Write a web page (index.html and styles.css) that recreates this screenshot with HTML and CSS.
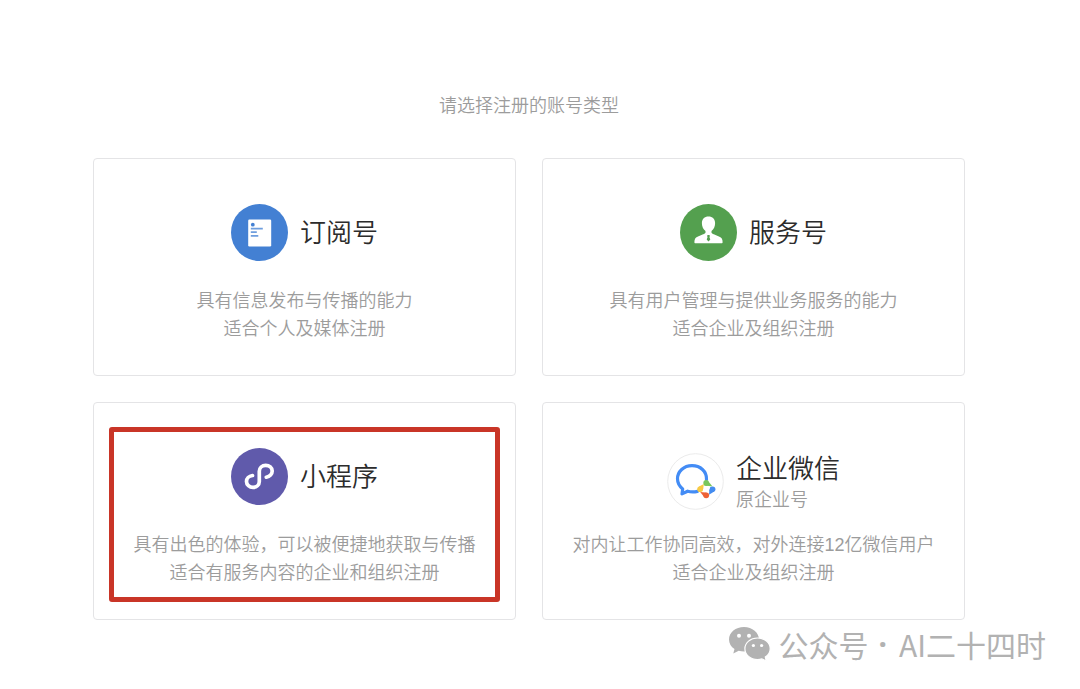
FILE: index.html
```html
<!DOCTYPE html>
<html lang="zh-CN">
<head>
<meta charset="utf-8">
<meta name="viewport" content="width=device-width, initial-scale=1">
<title>请选择注册的账号类型</title>
<link rel="stylesheet" href="styles.css">
</head>
<body>
<main class="page">
  <h1 class="prompt">请选择注册的账号类型</h1>
  <div class="types">
    <a class="card" href="#subscription">
      <div class="brand">
        <svg class="icon" viewBox="0 0 57 57" aria-hidden="true">
          <circle cx="28.5" cy="28.5" r="28.5" fill="#4380d3"/>
          <rect x="17.200" y="15.500" width="23" height="27" rx="1.200" fill="#fff"/>
          <circle cx="21.800" cy="20.700" r="1.900" fill="#4380d3"/>
          <path d="M19.800 24.700h12M19.800 28.200h6M19.800 31.900h7.500" stroke="#6f9ede" stroke-width="1.700"/>
        </svg>
        <h2 class="name">订阅号</h2>
      </div>
      <p class="desc">具有信息发布与传播的能力<br>适合个人及媒体注册</p>
    </a>
    <a class="card" href="#service">
      <div class="brand">
        <svg class="icon" viewBox="0 0 57 57" aria-hidden="true">
          <circle cx="28.5" cy="28.5" r="28.5" fill="#54a04f"/>
          <path d="M28.500 12.500c-4 0-6.600 2.700-6.600 6.700 0 3 1.300 6.200 3.600 7.900v1.700c-.3 1.600-8.500 3.100-10.300 5.700-.6 1-.8 2.300-.8 3.700 0 .6.400 1 1 1h26.200c.6 0 1-.4 1-1 0-1.400-.2-2.700-.8-3.700-1.800-2.600-10-4.100-10.300-5.700v-1.700c2.300-1.700 3.600-4.900 3.600-7.900 0-4-2.600-6.700-6.600-6.700z" fill="#fff"/>
          <path d="M27.500 31h2l.4 1.200-.5.800.9 2.600-1.800 2-1.800-2 .9-2.600-.5-.8z" fill="#54a04f"/>
        </svg>
        <h2 class="name">服务号</h2>
      </div>
      <p class="desc">具有用户管理与提供业务服务的能力<br>适合企业及组织注册</p>
    </a>
    <a class="card card-marked" href="#miniprogram">
      <div class="brand">
        <svg class="icon" viewBox="0 0 57 57" aria-hidden="true">
          <circle cx="28.5" cy="28.5" r="28.5" fill="#605aab"/>
          <path d="M21.500 27.500c-3.600.5-6 3-6 6 0 3.300 2.900 5.900 6.500 5.900s6.300-2.600 6.300-5.900V23.200c0-3.300 2.800-5.900 6.400-5.900s6.500 2.500 6.500 5.700c0 3-2.400 5.500-5.900 6.200" fill="none" stroke="#fff" stroke-width="3.700" stroke-linecap="round"/>
        </svg>
        <h2 class="name">小程序</h2>
      </div>
      <p class="desc">具有出色的体验，可以被便捷地获取与传播<br>适合有服务内容的企业和组织注册</p>
    </a>
    <a class="card" href="#work">
      <div class="brand brand-stacked">
        <svg class="icon" viewBox="0 0 57 57" aria-hidden="true">
          <circle cx="28.500" cy="28.500" r="27.800" fill="#fff" stroke="#ebebeb"/>
          <path d="M39.500 26.500c.3-8.300-6.200-13.800-14.500-13.800-8.200 0-14.500 5.800-14.500 13.100 0 4.300 2 7.600 5.200 10.100l-.7 5 5.600-2.700c3.300 1 6.400 1 9.900.2" fill="none" stroke="#438cf5" stroke-width="3.200" stroke-linejoin="round" stroke-linecap="round"/>
          <path d="M41.700 28.800L45.500 33.400L40.200 32.800L36.800 31.900z" fill="#79c75b"/>
          <circle cx="39.200" cy="30" r="2.900" fill="#79c75b"/>
          <path d="M46.800 38.700L42 41.700L42.300 37.200L43.600 33.800z" fill="#438cf0"/>
          <circle cx="45.600" cy="36.200" r="2.800" fill="#438cf0"/>
          <path d="M36.700 43.600L33.200 39L38.300 39.500L41.700 40.500z" fill="#ee6235"/>
          <circle cx="39.200" cy="42.300" r="2.900" fill="#ee6235"/>
          <path d="M31.600 33.800L36.800 31L36.300 35.600L35.200 38.600z" fill="#f8ca43"/>
          <circle cx="33" cy="36.200" r="2.800" fill="#f8ca43"/>
        </svg>
        <div>
          <h2 class="name">企业微信</h2>
          <p class="former">原企业号</p>
        </div>
      </div>
      <p class="desc">对内让工作协同高效，对外连接12亿微信用户<br>适合企业及组织注册</p>
    </a>
  </div>
</main>
<footer class="signature">
  <svg class="chat" viewBox="0 0 42 34" aria-hidden="true">
    <path d="M15 0C6.700 0 0 5.500 0 12.400c0 3.900 2.100 7.300 5.500 9.600L4.300 26.500l5.400-2.800c1.700.5 3.400.8 5.300.8 8.300 0 15-5.400 15-12.100S23.300 0 15 0z" fill="#b2b2b2"/>
    <path d="M28.500 11c-7 0-12.600 4.700-12.600 10.700s5.600 10.900 12.600 10.900c1.600 0 3-.2 4.400-.7l4.400 2.200-1-4c3-2 4.900-5 4.900-8.400 0-6-5.700-10.700-12.700-10.700z" fill="#b2b2b2" stroke="#fff" stroke-width="1.200"/>
    <circle cx="10" cy="8.800" r="2" fill="#fff"/><circle cx="20" cy="8.800" r="2" fill="#fff"/>
    <circle cx="24.400" cy="18.500" r="1.600" fill="#fff"/><circle cx="32.600" cy="18.500" r="1.600" fill="#fff"/>
  </svg>
  <span>公众号</span><span class="dot">·</span><span>AI二十四时</span>
</footer>
</body>
</html>
```

FILE: styles.css
```css
* {
  box-sizing: border-box;
}

body {
  margin: 0;
  background: #fff;
  color: #9c9c9c;
  font-family: "Liberation Sans", "Noto Sans CJK SC", sans-serif;
  font-size: 18px;
  font-weight: 350;
  line-height: 28px;
}

h1, h2, p {
  margin: 0;
  font-weight: inherit;
}

.page {
  max-width: 1080px;
  padding: 92px 115px 0 93px;
}

.prompt {
  margin-bottom: 38px;
  font-size: 18px;
  text-align: center;
}

.types {
  display: grid;
  grid-template-columns: repeat(2, 1fr);
  gap: 26px;
}

.card {
  position: relative;
  padding: 45px 8px 32px;
  border: 1px solid #e4e4e6;
  border-radius: 4px;
  color: inherit;
  text-align: center;
  text-decoration: none;
}

.card-marked::after {
  content: "";
  position: absolute;
  inset: 24px 15px 17px;
  border: 5px solid #c93527;
  border-radius: 3px;
}

.brand {
  display: flex;
  align-items: center;
  justify-content: center;
  gap: 12px;
  margin-bottom: 26px;
}

.brand-stacked {
  padding-top: 2px;
  margin-bottom: 18px;
  text-align: left;
}

.icon {
  width: 57px;
  height: 57px;
}

.name {
  padding-top: 2px;
  color: #2c2c2c;
  font-size: 26px;
  line-height: 35px;
}

.former {
  line-height: 26px;
}

.signature {
  display: flex;
  align-items: center;
  justify-content: flex-end;
  max-width: 1080px;
  padding: 6px 34px 0 0;
  color: #b2b2b2;
  font-family: "Noto Sans CJK SC", sans-serif;
  font-size: 30px;
  font-weight: 400;
  line-height: 36px;
}

.chat {
  width: 42px;
  height: 34px;
  margin-right: 8px;
}

.dot {
  margin: 0 12px 0 10px;
  font-family: "Noto Sans", sans-serif;
  font-weight: 700;
}
```
